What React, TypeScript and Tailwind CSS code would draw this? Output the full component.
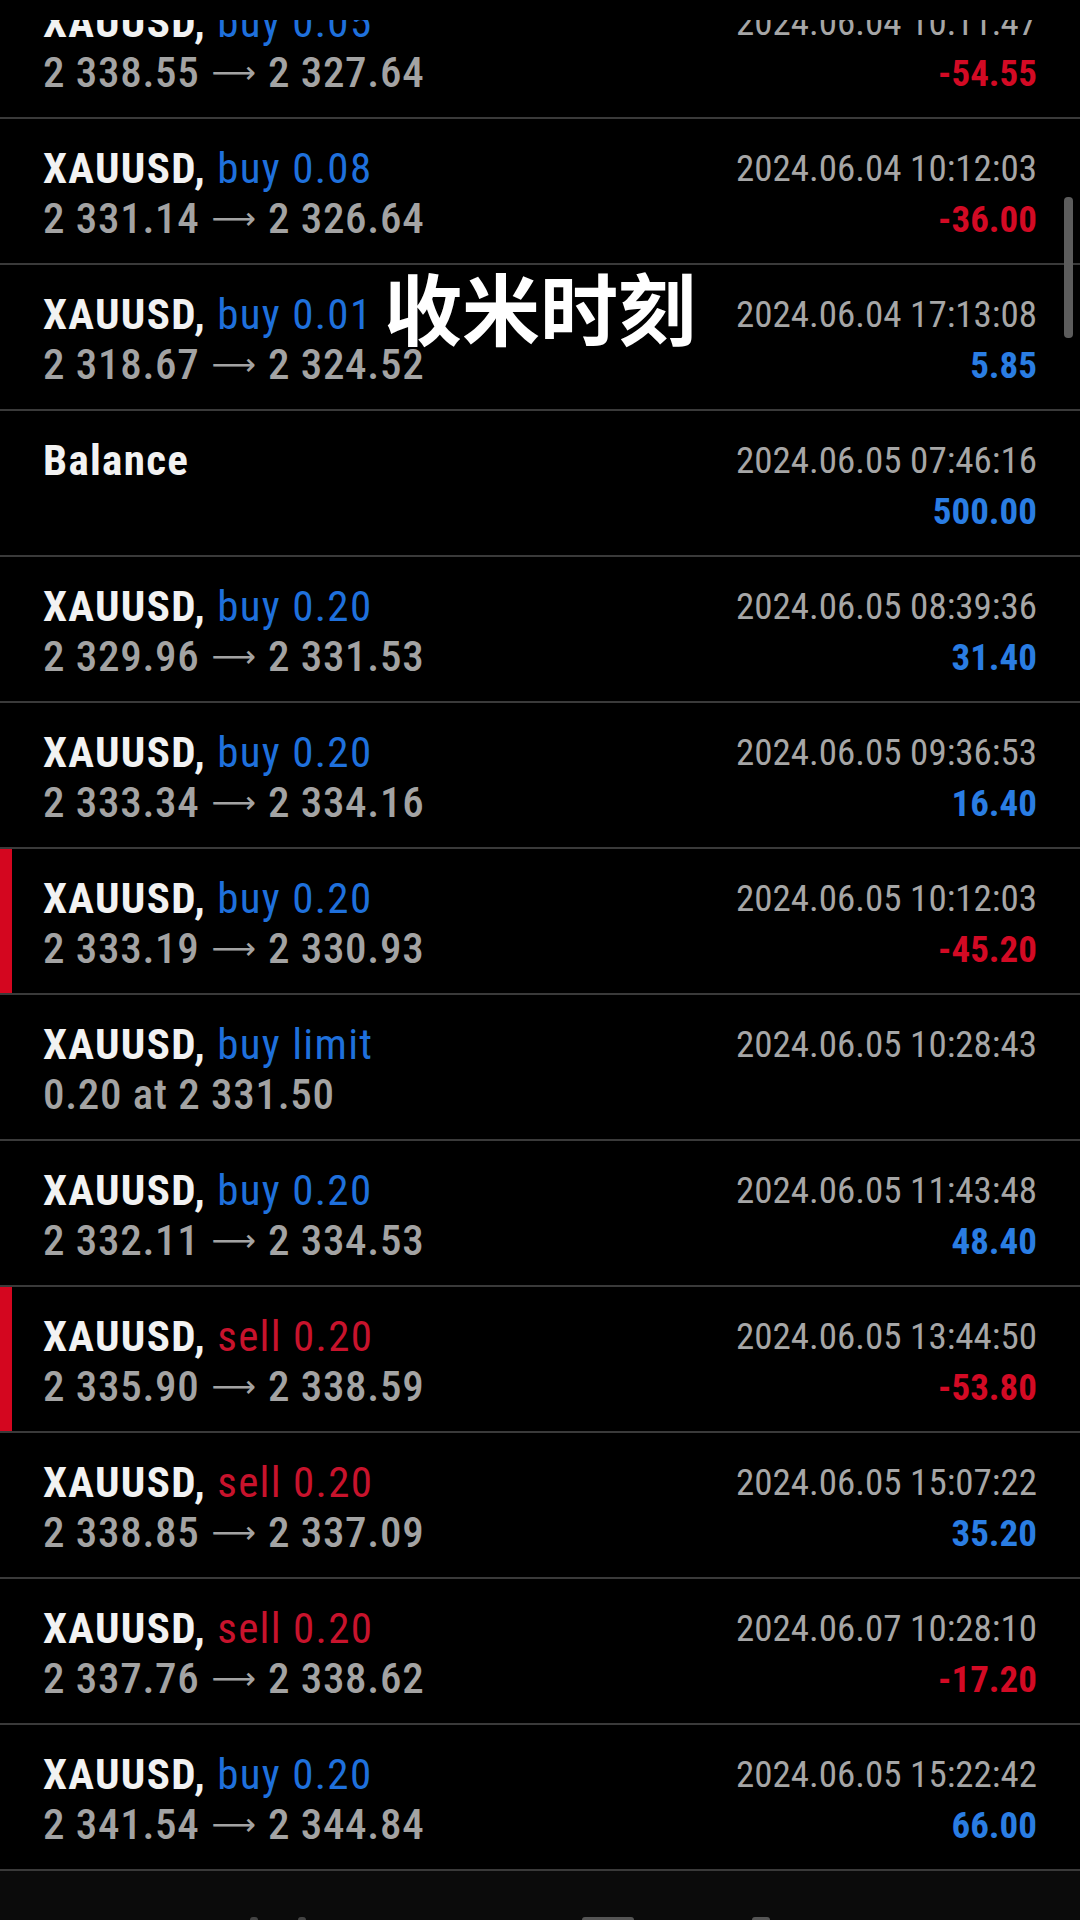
type Deal = {
  title: string;
  action?: string;
  side?: "buy" | "sell";
  open?: string;
  close?: string;
  note?: string;
  time: string;
  profit?: string;
  marked?: boolean;
};

const deals: Deal[] = [
  { title: "XAUUSD,", action: "buy 0.05", side: "buy", open: "2 338.55", close: "2 327.64", time: "2024.06.04 10:11:47", profit: "-54.55" },
  { title: "XAUUSD,", action: "buy 0.08", side: "buy", open: "2 331.14", close: "2 326.64", time: "2024.06.04 10:12:03", profit: "-36.00" },
  { title: "XAUUSD,", action: "buy 0.01", side: "buy", open: "2 318.67", close: "2 324.52", time: "2024.06.04 17:13:08", profit: "5.85" },
  { title: "Balance", time: "2024.06.05 07:46:16", profit: "500.00" },
  { title: "XAUUSD,", action: "buy 0.20", side: "buy", open: "2 329.96", close: "2 331.53", time: "2024.06.05 08:39:36", profit: "31.40" },
  { title: "XAUUSD,", action: "buy 0.20", side: "buy", open: "2 333.34", close: "2 334.16", time: "2024.06.05 09:36:53", profit: "16.40" },
  { title: "XAUUSD,", action: "buy 0.20", side: "buy", open: "2 333.19", close: "2 330.93", time: "2024.06.05 10:12:03", profit: "-45.20", marked: true },
  { title: "XAUUSD,", action: "buy limit", side: "buy", note: "0.20 at 2 331.50", time: "2024.06.05 10:28:43" },
  { title: "XAUUSD,", action: "buy 0.20", side: "buy", open: "2 332.11", close: "2 334.53", time: "2024.06.05 11:43:48", profit: "48.40" },
  { title: "XAUUSD,", action: "sell 0.20", side: "sell", open: "2 335.90", close: "2 338.59", time: "2024.06.05 13:44:50", profit: "-53.80", marked: true },
  { title: "XAUUSD,", action: "sell 0.20", side: "sell", open: "2 338.85", close: "2 337.09", time: "2024.06.05 15:07:22", profit: "35.20" },
  { title: "XAUUSD,", action: "sell 0.20", side: "sell", open: "2 337.76", close: "2 338.62", time: "2024.06.07 10:28:10", profit: "-17.20" },
  { title: "XAUUSD,", action: "buy 0.20", side: "buy", open: "2 341.54", close: "2 344.84", time: "2024.06.05 15:22:42", profit: "66.00" },
];

const DealRow = ({ deal }: { deal: Deal }) => {
  const loss = deal.profit?.startsWith("-");
  return (
    <div className="flex h-[146px] shrink-0 border-b-2 border-[#3a3a3a]">
      <div className={deal.marked ? "w-[12px] bg-[#d4061f]" : "w-[12px]"} />
      <div className="flex flex-1 justify-between pl-[31px] pr-[43px] pt-6">
        <div className="flex flex-col">
          <div className="text-[43px] leading-[50px] whitespace-nowrap tracking-[1.3px]">
            <span className="font-bold text-[#f2f2f2]">{deal.title}</span>
            {deal.action && (
              <span className={deal.side === "sell" ? "text-[#c8132c]" : "text-[#1f70dc]"}>
                {" "}
                {deal.action}
              </span>
            )}
          </div>
          {deal.open && (
            <div className="flex items-center text-[43px] leading-[50px] font-medium text-[#a3a3a3] whitespace-nowrap tracking-[0.7px]">
              <span>{deal.open}</span>
              <span className="mx-[12px] font-['DejaVu_Sans',sans-serif] text-[31px] font-normal tracking-normal [font-stretch:100%]">⟶</span>
              <span>{deal.close}</span>
            </div>
          )}
          {deal.note && (
            <div className="text-[43px] leading-[50px] font-medium text-[#a3a3a3] whitespace-nowrap tracking-[0.7px]">
              {deal.note}
            </div>
          )}
        </div>
        <div className="flex flex-col items-end">
          <div className="text-[37px] leading-[52px] text-[#a6a6a6] whitespace-nowrap">{deal.time}</div>
          {deal.profit && (
            <div
              className={
                loss
                  ? "text-[37px] leading-[50px] font-bold text-[#d30a24]"
                  : "text-[37px] leading-[50px] font-bold text-[#2a7de3]"
              }
            >
              {deal.profit}
            </div>
          )}
        </div>
      </div>
    </div>
  );
};

export default function App() {
  return (
    <div className="relative flex h-[1920px] w-[1080px] flex-col overflow-hidden bg-black font-['Roboto_Condensed',Roboto,sans-serif] [font-stretch:75%]">
      {/* strip of the app bar above the list */}
      <div className="h-[20px] shrink-0 bg-black" />

      <div className="flex-1 overflow-hidden">
        <div className="-mt-[47px] flex flex-col">
          {deals.map((d, i) => (
            <DealRow key={i} deal={d} />
          ))}

          {/* bottom navigation, only its top edge is on screen */}
          <div className="flex h-[60px] justify-between bg-[#0b0b0b] px-[250px] pt-[46px]">
            <div className="flex gap-[40px]">
              <div className="h-[3px] w-[8px] rounded-t bg-[#444]" />
              <div className="h-[3px] w-[8px] rounded-t bg-[#444]" />
            </div>
            <div className="flex gap-[118px] pr-[60px]">
              <div className="h-[3px] w-[52px] rounded-t bg-[#555]" />
              <div className="h-[3px] w-[18px] rounded-t-full bg-[#555]" />
            </div>
          </div>
        </div>
      </div>

      {/* scroll indicator */}
      <div className="absolute left-[1064px] top-[197px] h-[141px] w-[9px] rounded-sm bg-[#5c5c5c]" />

      {/* video caption overlay */}
      <div className="absolute inset-x-0 top-[267px] text-center font-['Noto_Sans_CJK_SC',sans-serif] text-[78px] font-bold leading-none text-white [font-stretch:100%]">
        收米时刻
      </div>
    </div>
  );
}
